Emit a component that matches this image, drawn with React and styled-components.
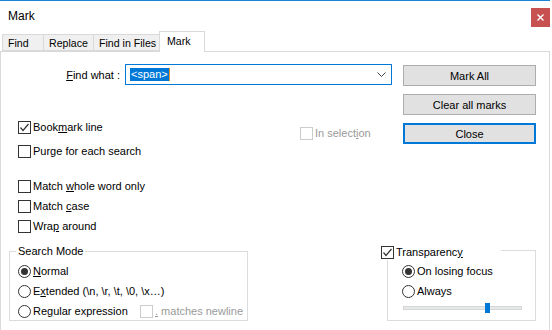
import React from "react";
import styled, { createGlobalStyle } from "styled-components";

const GlobalStyle = createGlobalStyle`
  html, body {
    margin: 0;
    padding: 0;
    background: #ffffff;
  }
  body {
    font-family: "Liberation Sans", Arial, sans-serif;
    font-size: 11px;
    color: #000000;
  }
  * {
    box-sizing: border-box;
  }
`;

const Window = styled.div`
  width: 550px;
  height: 330px;
  border-top: 1px solid #1c84d6;
  background: #ffffff;
  display: flex;
  flex-direction: column;
  overflow: hidden;
`;

const TitleBar = styled.div`
  height: 30px;
  display: flex;
  justify-content: space-between;
  align-items: flex-start;
`;

const Title = styled.div`
  font-size: 12px;
  line-height: 30px;
  padding-left: 8px;
`;

const CloseX = styled.div`
  width: 19px;
  height: 19px;
  margin-top: 7px;
  background: #c75050;
  display: flex;
  align-items: center;
  justify-content: center;
`;

const TabStrip = styled.div`
  height: 20px;
  display: flex;
  align-items: flex-end;
  padding-left: 2px;
`;

const Tab = styled.div`
  width: ${(p) => p.$w}px;
  height: ${(p) => (p.$active ? 21 : 17)}px;
  margin-left: -1px;
  margin-bottom: ${(p) => (p.$active ? -1 : 0)}px;
  padding-left: ${(p) => (p.$active ? 7 : 5)}px;
  padding-bottom: ${(p) => (p.$active ? 3 : 0)}px;
  border: 1px solid #d9d9d9;
  border-bottom: ${(p) => (p.$active ? "none" : "1px solid #d9d9d9")};
  background: ${(p) => (p.$active ? "#ffffff" : "#f0f0f0")};
  font-size: 10.6px;
  white-space: nowrap;
  display: flex;
  align-items: center;
  position: relative;
  z-index: ${(p) => (p.$active ? 1 : 0)};

  &:first-child {
    margin-left: 0;
  }
`;

const Panel = styled.div`
  width: 550px;
  flex: 1;
  border: 1px solid #d9d9d9;
  border-bottom: none;
  display: flex;
  flex-direction: column;
`;

const Upper = styled.div`
  display: flex;
  padding-top: 12px;
`;

const LeftCol = styled.div`
  width: 391px;
  display: flex;
  flex-direction: column;
`;

const FindRow = styled.div`
  display: flex;
  align-items: center;
  height: 21px;
`;

const FindLabel = styled.div`
  width: 119px;
  text-align: right;
`;

const Combo = styled.div`
  width: 267px;
  height: 21px;
  margin-left: 5px;
  border: 1px solid #0078d7;
  display: flex;
  align-items: center;
  justify-content: space-between;
  padding: 0 5px 0 4px;
`;

const Selected = styled.span`
  background: #0078d7;
  color: #ffffff;
  line-height: 13px;
  padding: 0 1px 0 1px;
  border-right: 1px solid #e8912d;
`;

const ButtonCol = styled.div`
  width: 133px;
  margin-left: 11px;
  padding-top: 1px;
  display: flex;
  flex-direction: column;
  gap: 8px;
`;

const Button = styled.button`
  height: 21px;
  width: 100%;
  background: #e1e1e1;
  border: ${(p) => (p.$default ? "2px solid #0078d7" : "1px solid #adadad")};
  font-family: "Liberation Sans", Arial, sans-serif;
  font-size: 11px;
  color: #000000;
  padding: 0;
`;

const OptionsTop = styled.div`
  display: flex;
  margin-top: 34px;
`;

const CheckGroup = styled.div`
  width: ${(p) => p.$w || "auto"};
  padding-left: ${(p) => p.$pl || 0}px;
  margin-top: ${(p) => p.$mt || 0}px;
  display: flex;
  flex-direction: column;
  gap: ${(p) => p.$gap || 0}px;
`;

const Row = styled.div`
  height: 16px;
  display: flex;
  align-items: center;
  gap: 2px;
  color: ${(p) => (p.$disabled ? "#9a9a9a" : "#000000")};
  width: ${(p) => (p.$w ? `${p.$w}px` : "auto")};
  flex-shrink: 0;
`;

const Box = styled.span`
  width: 13px;
  height: 13px;
  border: 1px solid ${(p) => (p.$disabled ? "#cccccc" : "#333333")};
  background: #ffffff;
  display: flex;
  align-items: center;
  justify-content: center;
  flex-shrink: 0;
`;

const Circle = styled.span`
  width: 13px;
  height: 13px;
  border: 1px solid #333333;
  border-radius: 50%;
  background: #ffffff;
  display: flex;
  align-items: center;
  justify-content: center;
  flex-shrink: 0;

  &::after {
    content: "";
    width: 7px;
    height: 7px;
    border-radius: 50%;
    background: ${(p) => (p.$on ? "#333333" : "transparent")};
  }
`;

const Bottom = styled.div`
  display: flex;
  align-items: flex-start;
  margin-top: 6px;
`;

const Group = styled.fieldset`
  margin: ${(p) => p.$m};
  width: ${(p) => p.$w}px;
  height: ${(p) => p.$h}px;
  border: 1px solid #dcdcdc;
  padding: 0;
  min-inline-size: 0;
`;

const Legend = styled.legend`
  margin-left: ${(p) => p.$ml}px;
  padding: ${(p) => p.$pad};
  width: ${(p) => (p.$w ? `${p.$w}px` : "auto")};
  line-height: 14px;
`;

const GroupBody = styled.div`
  padding-left: ${(p) => p.$pl}px;
  padding-top: ${(p) => p.$pt}px;
  display: flex;
  flex-direction: column;
  gap: 4px;
`;

const InlineRow = styled.div`
  display: flex;
  align-items: center;
`;

const Slider = styled.div`
  position: relative;
  width: 119px;
  height: 10px;
  margin-left: 1px;
`;

const Track = styled.div`
  height: 4px;
  margin-top: 3px;
  background: #e7eaea;
  border: 1px solid #d6d6d6;
`;

const Thumb = styled.div`
  position: absolute;
  top: 0;
  width: 5px;
  height: 10px;
  background: #0078d7;
`;

const Check = ({ on, disabled }) => (
  <Box $disabled={disabled}>
    {on && (
      <svg width="11" height="11" viewBox="0 0 11 11">
        <polyline points="1.5,5.5 4,8.5 9.5,2" fill="none" stroke="#333" strokeWidth="1.2" />
      </svg>
    )}
  </Box>
);

const CheckRow = ({ on, disabled, w, children }) => (
  <Row $disabled={disabled} $w={w}>
    <Check on={on} disabled={disabled} />
    <span>{children}</span>
  </Row>
);

const RadioRow = ({ on, w, children }) => (
  <Row $w={w}>
    <Circle $on={on} />
    <span>{children}</span>
  </Row>
);

const opacity = 0.69;

export default function App() {
  return (
    <>
      <GlobalStyle />
      <Window>
        <TitleBar>
          <Title>Mark</Title>
          <CloseX>
            <svg width="7" height="7" viewBox="0 0 7 7">
              <path d="M0.5 0.5 L6.5 6.5 M6.5 0.5 L0.5 6.5" stroke="#fff" strokeWidth="1.4" />
            </svg>
          </CloseX>
        </TitleBar>
        <TabStrip>
          <Tab $w={42}>Find</Tab>
          <Tab $w={51}>Replace</Tab>
          <Tab $w={67}>Find in Files</Tab>
          <Tab $w={46} $active>
            Mark
          </Tab>
        </TabStrip>
        <Panel>
          <Upper>
            <LeftCol>
              <FindRow>
                <FindLabel>
                  <u>F</u>ind what :
                </FindLabel>
                <Combo>
                  <Selected>&lt;span&gt;</Selected>
                  <svg width="9" height="5" viewBox="0 0 9 5">
                    <polyline points="0.5,0.5 4.5,4.5 8.5,0.5" fill="none" stroke="#444" strokeWidth="1" />
                  </svg>
                </Combo>
              </FindRow>
              <OptionsTop>
                <CheckGroup $w="299px" $pl={17} $gap={8}>
                  <CheckRow on>
                    Book<u>m</u>ark line
                  </CheckRow>
                  <CheckRow>Purge for each search</CheckRow>
                </CheckGroup>
                <CheckGroup $mt={6}>
                  <CheckRow disabled>
                    In select<u>i</u>on
                  </CheckRow>
                </CheckGroup>
              </OptionsTop>
              <CheckGroup $pl={17} $gap={4} $mt={19}>
                <CheckRow>
                  Match <u>w</u>hole word only
                </CheckRow>
                <CheckRow>
                  Match <u>c</u>ase
                </CheckRow>
                <CheckRow>
                  Wra<u>p</u> around
                </CheckRow>
              </CheckGroup>
            </LeftCol>
            <ButtonCol>
              <Button>Mark All</Button>
              <Button>Clear all marks</Button>
              <Button $default>Close</Button>
            </ButtonCol>
          </Upper>
          <Bottom>
            <Group $m="4px 0 0 8px" $w={239} $h={77}>
              <Legend $ml={6} $pad="0 2px">
                Search Mode
              </Legend>
              <GroupBody $pl={8} $pt={5}>
                <RadioRow on>
                  <u>N</u>ormal
                </RadioRow>
                <RadioRow>
                  E<u>x</u>tended (\n, \r, \t, \0, \x…)
                </RadioRow>
                <InlineRow>
                  <RadioRow w={122}>
                    Re<u>g</u>ular expression
                  </RadioRow>
                  <CheckRow disabled>
                    <u>.</u> matches newline
                  </CheckRow>
                </InlineRow>
              </GroupBody>
            </Group>
            <Group $m="0 0 0 139px" $w={149} $h={81}>
              <Legend $ml={-7} $pad="4px 0 0 0" $w={120}>
                <CheckRow on>
                  Transparenc<u>y</u>
                </CheckRow>
              </Legend>
              <GroupBody $pl={14} $pt={3}>
                <RadioRow on>On losing focus</RadioRow>
                <RadioRow>Always</RadioRow>
                <Slider>
                  <Track />
                  <Thumb style={{ left: `${Math.round(opacity * 119)}px` }} />
                </Slider>
              </GroupBody>
            </Group>
          </Bottom>
        </Panel>
      </Window>
    </>
  );
}
